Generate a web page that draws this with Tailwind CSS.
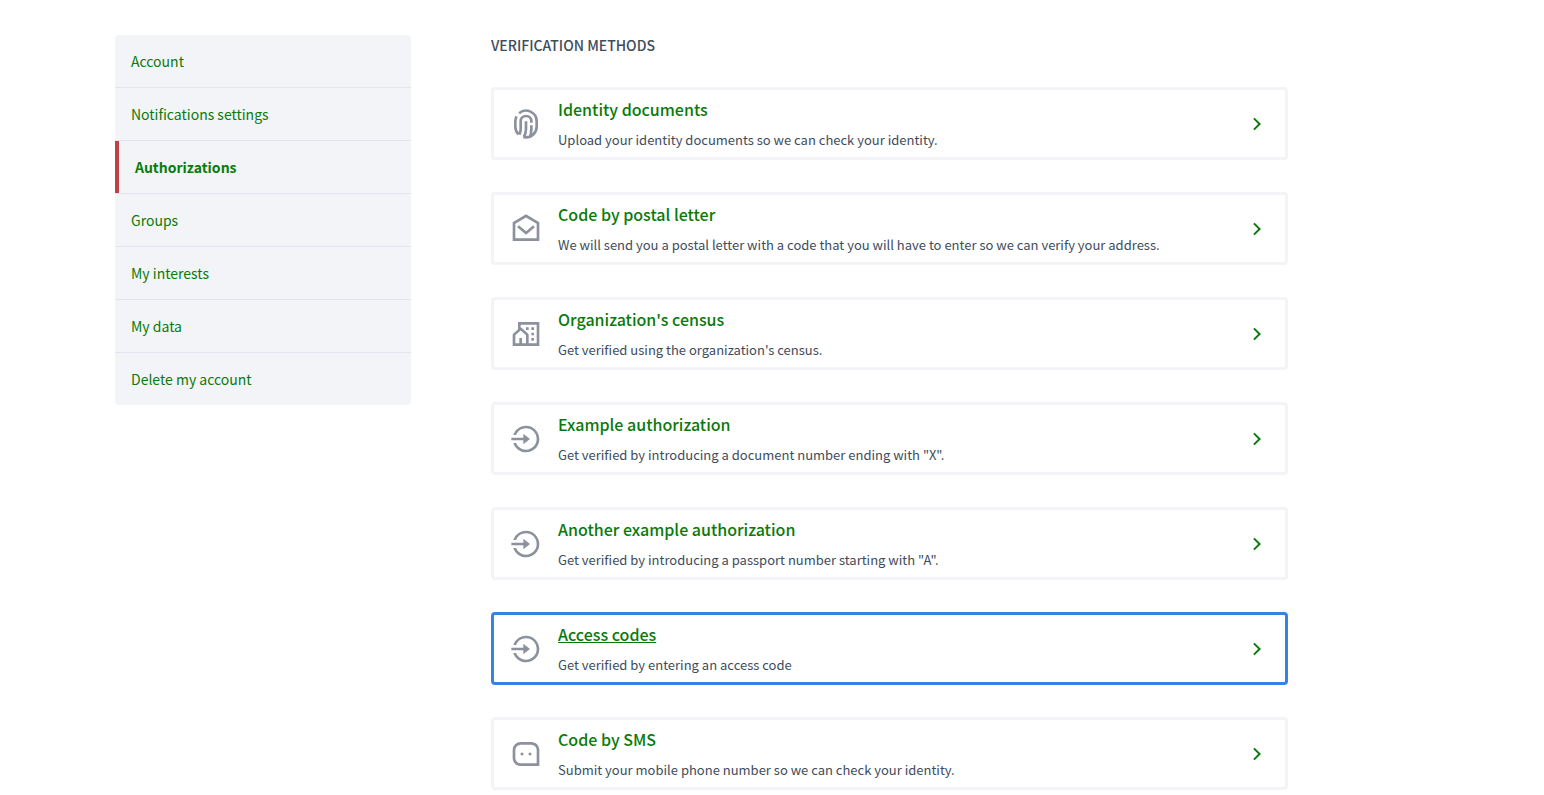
<!DOCTYPE html>
<html lang="en">
<head>
<meta charset="utf-8">
<title>Authorizations</title>
<meta name="viewport" content="width=device-width, initial-scale=1">
<script src="https://cdn.jsdelivr.net/npm/@tailwindcss/browser@4"></script>
</head>
<body class="bg-white font-['Source_Sans_Pro','Noto_Sans_CJK_SC',sans-serif] text-[#3e4c5c]">
<svg class="hidden" aria-hidden="true">
  <symbol id="login" viewBox="0 0 24 24"><path d="M10 11V8L15 12L10 16V13H1V11H10ZM2.4578 15H4.58152C5.76829 17.9318 8.64262 20 12 20C16.4183 20 20 16.4183 20 12C20 7.58172 16.4183 4 12 4C8.64262 4 5.76829 6.06817 4.58152 9H2.4578C3.73207 4.94289 7.52236 2 12 2C17.5228 2 22 6.47715 22 12C22 17.5228 17.5228 22 12 22C7.52236 22 3.73207 19.0571 2.4578 15Z"/></symbol>
  <symbol id="chevron" viewBox="0 0 24 24"><path d="M13.1717 12L8.22192 7.05025L9.63614 5.63604L16.0001 12L9.63614 18.364L8.22192 16.9497L13.1717 12Z"/></symbol>
</svg>
<div class="mx-auto flex max-w-[1314px] items-start gap-20 pt-[35px] pr-[141px] pb-8">
  <nav aria-label="Profile" class="w-74 shrink-0">
    <ul class="divide-y divide-[#e1e5ef] overflow-hidden rounded bg-[#f2f4f8] text-sm leading-5 text-[#0a7a0a]">
      <li><a href="#" class="block p-4">Account</a></li>
      <li><a href="#" class="block p-4">Notifications settings</a></li>
      <li><a href="#" aria-current="page" class="block border-l-4 border-[#bf4045] p-4 font-bold">Authorizations</a></li>
      <li><a href="#" class="block p-4">Groups</a></li>
      <li><a href="#" class="block p-4">My interests</a></li>
      <li><a href="#" class="block p-4">My data</a></li>
      <li><a href="#" class="block p-4">Delete my account</a></li>
    </ul>
  </nav>
  <main class="min-w-0 grow">
    <h1 class="text-sm leading-5 font-medium uppercase">Verification methods</h1>
    <div class="mt-8 flex flex-col gap-8">
      <a href="#" class="flex items-center gap-4 rounded border-3 border-[#f2f4f8] px-4">
        <svg class="size-8 shrink-0 fill-none stroke-[#8c919e] stroke-2" viewBox="0 0 24 24"><path d="M6.8 3.9A8 8 0 0 1 20 10v4a8 8 0 0 1-8 8c-.7 0-1.400-.1-2-.3M4.900 6.300A8 8 0 0 0 4 10v4c0 2.200.9 4.300 2.500 5.800M7 20c.7-1.200 1-2.600 1-4.200V10a4 4 0 0 1 8 0v1M12 10v5.800c0 2.300-.6 4.200-1.700 5.900M16 13v3c0 1.900-.3 3.600-1 5.300"/></svg>
        <span class="grow pt-1 pb-px"><span class="block text-base leading-[30px] font-medium text-[#0a7a0a]">Identity documents</span><span class="block text-[13px] leading-8">Upload your identity documents so we can check your identity.</span></span>
        <svg class="size-6 shrink-0 fill-[#0a7a0a]"><use href="#chevron"/></svg>
      </a>
      <a href="#" class="flex items-center gap-4 rounded border-3 border-[#f2f4f8] px-4">
        <svg class="size-8 shrink-0 fill-[#8c919e]" viewBox="0 0 24 24"><path d="M2 7l10-6 10 6v14H2zM4 8.133V19h16V8.132l-7.996-4.8L4 8.132zm8.06 5.565l5.296-4.463 1.288 1.53-6.57 5.537-6.71-5.53 1.272-1.544 5.424 4.47z" fill-rule="evenodd"/></svg>
        <span class="grow pt-1 pb-px"><span class="block text-base leading-[30px] font-medium text-[#0a7a0a]">Code by postal letter</span><span class="block text-[13px] leading-8">We will send you a postal letter with a code that you will have to enter so we can verify your address.</span></span>
        <svg class="size-6 shrink-0 fill-[#0a7a0a]"><use href="#chevron"/></svg>
      </a>
      <a href="#" class="flex items-center gap-4 rounded border-3 border-[#f2f4f8] px-4">
        <svg class="size-8 shrink-0 fill-[#8c919e]" viewBox="0 0 24 24"><path d="M22 21H2v-8.513a1 1 0 0 1 .343-.754L6 8.544V3h16v18zM9 19h3v-6.058L8 9.454l-4 3.488V19h3v-4h2v4zm5 0h6V5H8v2.127c.234 0 .469.082.657.247l5 4.359a1 1 0 0 1 .343.754V19zm2-8h2v2h-2v-2zm0 4h2v2h-2v-2zm0-8h2v2h-2V7zm-4 0h2v2h-2V7z" fill-rule="evenodd"/></svg>
        <span class="grow pt-1 pb-px"><span class="block text-base leading-[30px] font-medium text-[#0a7a0a]">Organization's census</span><span class="block text-[13px] leading-8">Get verified using the organization's census.</span></span>
        <svg class="size-6 shrink-0 fill-[#0a7a0a]"><use href="#chevron"/></svg>
      </a>
      <a href="#" class="flex items-center gap-4 rounded border-3 border-[#f2f4f8] px-4">
        <svg class="size-8 shrink-0 fill-[#8c919e]"><use href="#login"/></svg>
        <span class="grow pt-1 pb-px"><span class="block text-base leading-[30px] font-medium text-[#0a7a0a]">Example authorization</span><span class="block text-[13px] leading-8">Get verified by introducing a document number ending with "X".</span></span>
        <svg class="size-6 shrink-0 fill-[#0a7a0a]"><use href="#chevron"/></svg>
      </a>
      <a href="#" class="flex items-center gap-4 rounded border-3 border-[#f2f4f8] px-4">
        <svg class="size-8 shrink-0 fill-[#8c919e]"><use href="#login"/></svg>
        <span class="grow pt-1 pb-px"><span class="block text-base leading-[30px] font-medium text-[#0a7a0a]">Another example authorization</span><span class="block text-[13px] leading-8">Get verified by introducing a passport number starting with "A".</span></span>
        <svg class="size-6 shrink-0 fill-[#0a7a0a]"><use href="#chevron"/></svg>
      </a>
      <a href="#" class="flex items-center gap-4 rounded border-3 border-[#3584e4] px-4">
        <svg class="size-8 shrink-0 fill-[#8c919e]"><use href="#login"/></svg>
        <span class="grow pt-1 pb-px"><span class="block text-base leading-[30px] font-medium text-[#0a7a0a] underline">Access codes</span><span class="block text-[13px] leading-8">Get verified by entering an access code</span></span>
        <svg class="size-6 shrink-0 fill-[#0a7a0a]"><use href="#chevron"/></svg>
      </a>
      <a href="#" class="flex items-center gap-4 rounded border-3 border-[#f2f4f8] px-4">
        <svg class="size-8 shrink-0 fill-[#8c919e]" viewBox="0 0 24 24"><path d="M2 8.994A5.99 5.99 0 0 1 8 3h8c3.313 0 6 2.695 6 5.994V21H8c-3.313 0-6-2.695-6-5.994V8.994zM20 19V8.994A4.004 4.004 0 0 0 16 5H8a3.99 3.99 0 0 0-4 3.994v6.012A4.004 4.004 0 0 0 8 19h12zm-6-8h2v2h-2v-2zm-6 0h2v2H8v-2z"/></svg>
        <span class="grow pt-1 pb-px"><span class="block text-base leading-[30px] font-medium text-[#0a7a0a]">Code by SMS</span><span class="block text-[13px] leading-8">Submit your mobile phone number so we can check your identity.</span></span>
        <svg class="size-6 shrink-0 fill-[#0a7a0a]"><use href="#chevron"/></svg>
      </a>
    </div>
  </main>
</div>
</body>
</html>
